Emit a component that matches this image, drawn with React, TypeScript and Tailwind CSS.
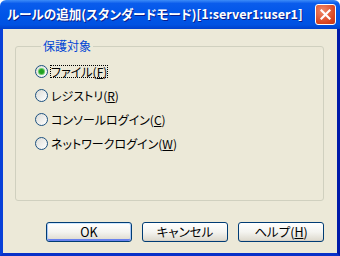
import { ReactNode } from "react"

const jp = "font-['Noto_Sans_CJK_JP','Noto_Sans',sans-serif] [font-feature-settings:'palt']"

function Radio({ checked, label, focused }: { checked?: boolean; label: ReactNode; focused?: boolean }) {
  return (
    <div className="flex h-[13px] items-center">
      <span className="relative flex h-[13px] w-[13px] flex-none items-center justify-center rounded-full border border-[#1C5180] bg-gradient-to-br from-[#DCDCD7] to-white">
        {checked && (
          <span className="h-[5px] w-[5px] rounded-full bg-[#21A121] shadow-[0_0_0_1px_#6CCB6C]" />
        )}
      </span>
      <span
        className={
          "ml-[2px] flex h-[13px] items-center px-[1px] text-[12px] leading-none text-black " +
          (focused ? "outline-1 outline-dotted outline-black -outline-offset-1" : "")
        }
      >
        {label}
      </span>
    </div>
  )
}

function Button({ children, isDefault }: { children: ReactNode; isDefault?: boolean }) {
  return (
    <button
      className={
        "flex h-[20px] w-[86px] items-center justify-center rounded-[3px] border border-[#003C74] bg-gradient-to-b from-white via-[#F4F4F0] to-[#DCD8CC] text-[12.5px] leading-none text-black " +
        (isDefault
          ? "shadow-[inset_0_1px_0_#CEE7FF,inset_1px_0_0_#A7C6F5,inset_-1px_0_0_#A7C6F5,inset_0_-2px_0_#6982EE]"
          : "shadow-[inset_0_-1px_0_#D6D0C5]")
      }
    >
      {children}
    </button>
  )
}

export default function App() {
  return (
    <div className={"flex h-[256px] w-[340px] flex-col " + jp}>
      <div className="flex h-[29px] flex-none items-center rounded-t-[6px] bg-[linear-gradient(to_bottom,#3D8CF8_0%,#0A5CEC_12%,#0055E8_50%,#0052E2_85%,#0040CC_100%)] pl-[7px] pr-[4px]">
        <span className="flex-1 whitespace-nowrap text-[12.6px] font-bold leading-none text-white [text-shadow:1px_1px_0_#0A1E8C]">
          ルールの追加(スタンダードモード)[1:server1:user1]
        </span>
        <span className="flex h-[21px] w-[21px] items-center justify-center rounded-[3px] border border-white bg-[radial-gradient(circle_at_35%_30%,#F08A6A,#D9431F_70%,#C2371A)]">
          <svg width="11" height="11" viewBox="0 0 11 11">
            <path d="M1.5 1.5 L9.5 9.5 M9.5 1.5 L1.5 9.5" stroke="white" strokeWidth="2.2" strokeLinecap="square" />
          </svg>
        </span>
      </div>
      <div className="flex flex-1 flex-col border-x-[3px] border-b-[3px] border-l-[#0840D8] border-r-[#0019A8] border-b-[#0831C8] bg-[#ECE9D8]">
        <fieldset className="ml-[12px] mr-[13px] mt-[11px] h-[161px] rounded-[3px] border border-[#D0D0BF] pl-[19px] pt-[13px]">
          <legend className="ml-[6px] px-[2px] text-[12px] leading-none text-[#0046D5]">保護対象</legend>
          <div className="flex flex-col gap-[11px]">
            <Radio checked focused label={<>ファイル(<u>F</u>)</>} />
            <Radio label={<>レジストリ(<u>R</u>)</>} />
            <Radio label={<>コンソールログイン(<u>C</u>)</>} />
            <Radio label={<>ネットワークログイン(<u>W</u>)</>} />
          </div>
        </fieldset>
        <div className="mr-[13px] mt-[21px] flex justify-end gap-[10px]">
          <Button isDefault>OK</Button>
          <Button>キャンセル</Button>
          <Button>ヘルプ(<u>H</u>)</Button>
        </div>
      </div>
    </div>
  )
}
